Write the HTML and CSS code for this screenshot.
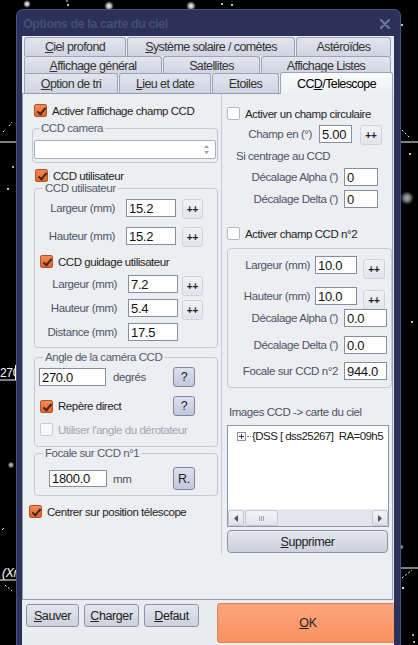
FILE: index.html
```html
<!DOCTYPE html>
<html lang="fr">
<head>
  <meta charset="UTF-8">
  <meta name="viewport" content="width=device-width, initial-scale=1.0">
  <title>Options de la carte du ciel</title>
  <link rel="stylesheet" href="styles.css">
</head>
<body>
  <div class="sky">
    <!-- star chart behind the dialog -->
    <svg class="chart" width="418" height="645" viewBox="0 0 418 645">
      <defs>
        <radialGradient id="glow">
          <stop offset="0" stop-color="#fff"/>
          <stop offset="0.5" stop-color="#ccc" stop-opacity="0.8"/>
          <stop offset="1" stop-color="#888" stop-opacity="0"/>
        </radialGradient>
      </defs>
      <circle cx="27" cy="4" r="4" fill="url(#glow)"/>
      <circle cx="68" cy="5" r="1" fill="#fff"/>
      <circle cx="67" cy="1" r="0.8" fill="#fff"/>
      <circle cx="109" cy="6" r="5" fill="url(#glow)"/>
      <circle cx="191" cy="6" r="5" fill="url(#glow)"/>
      <circle cx="222" cy="4" r="1" fill="#fff"/>
      <circle cx="232" cy="5" r="1" fill="#fff"/>
      <circle cx="402" cy="25" r="1" fill="#fff"/>
      <line x1="0" y1="142" x2="16" y2="142" stroke="#fff"/>
      <line x1="3" y1="132" x2="6" y2="129" stroke="#fff" stroke-dasharray="2 2"/>
      <line x1="9" y1="126" x2="12" y2="122" stroke="#fff" stroke-dasharray="2 2"/>
      <circle cx="13" cy="167" r="1.5" fill="url(#glow)"/>
      <circle cx="8" cy="189" r="1" fill="#fff"/>
      <line x1="401" y1="142" x2="418" y2="142" stroke="#fff"/>
      <line x1="402" y1="130" x2="410" y2="138" stroke="#fff" stroke-dasharray="2 2"/>
      <circle cx="410" cy="154" r="1" fill="#fff"/>
      <circle cx="407" cy="198" r="7" fill="url(#glow)" opacity="0.7"/>
      <circle cx="412" cy="322" r="1" fill="#fff"/>
      <circle cx="11" cy="465" r="3.5" fill="url(#glow)" opacity="0.8"/>
      <circle cx="401" cy="547" r="3" fill="url(#glow)" opacity="0.7"/>
      <line x1="0" y1="380" x2="16" y2="380" stroke="#fff"/>
      <line x1="15.5" y1="365" x2="15.5" y2="380" stroke="#fff"/>
      <text x="0" y="377" fill="#fff" font-family="Liberation Sans, sans-serif" font-size="12">270</text>
      <line x1="2" y1="530" x2="4" y2="528" stroke="#fff"/>
      <text x="2" y="577" fill="#fff" font-family="Liberation Sans, sans-serif" font-size="12" font-style="italic">(Xr</text>
      <line x1="0" y1="580" x2="16" y2="580" stroke="#fff"/>
      <line x1="5" y1="585" x2="12" y2="591" stroke="#fff" stroke-dasharray="2 2"/>
      <line x1="401" y1="568" x2="418" y2="568" stroke="#fff"/>
      <line x1="402" y1="578" x2="412" y2="570" stroke="#fff" stroke-dasharray="2 2"/>
      <circle cx="403" cy="588" r="1.2" fill="#ddd"/>
      <circle cx="413" cy="635" r="1.5" fill="url(#glow)"/>
      <circle cx="414" cy="642" r="1.5" fill="url(#glow)"/>
    </svg>

    <div class="window">
      <div class="titlebar">
        <span class="title">Options de la carte du ciel</span>
        <svg class="close" width="10" height="10" viewBox="0 0 10 10">
          <path d="M1 1 L9 9 M9 1 L1 9" stroke="#6c7497" stroke-width="2.4" stroke-linecap="round"/>
        </svg>
      </div>

      <div class="client">
        <div class="tabs">
          <div class="tab-row row-1">
            <div class="tab w-ciel"><u>C</u>iel profond</div>
            <div class="tab w-systeme"><u>S</u>ystème solaire / comètes</div>
            <div class="tab w-asteroides">Astéroïdes</div>
          </div>
          <div class="tab-row row-2">
            <div class="tab w-affichage"><u>A</u>ffichage général</div>
            <div class="tab w-satellites">Satellites</div>
            <div class="tab w-listes">Affichage Listes</div>
          </div>
          <div class="tab-row row-3">
            <div class="tab w-tri"><u>O</u>ption de tri</div>
            <div class="tab w-lieu"><u>L</u>ieu et date</div>
            <div class="tab w-etoiles">Etoiles</div>
            <div class="tab tab-active">CC<u>D</u>/Telescope</div>
          </div>
        </div>

        <div class="page">
          <div class="col-left">
            <label class="check first"><span class="box on"></span>Activer l'affichage champ CCD</label>

            <fieldset class="group camera">
              <legend>CCD camera</legend>
              <div class="combo">
                <svg class="spin" width="7" height="11" viewBox="0 0 7 11">
                  <path d="M3.5 1 L6 4 L1 4 Z M3.5 10 L6 7 L1 7 Z" fill="#9aa0ad"/>
                </svg>
              </div>
            </fieldset>

            <label class="check user"><span class="box on"></span>CCD utilisateur</label>

            <fieldset class="group user-box">
              <legend>CCD utilisateur</legend>
              <div class="field f-user">
                <span class="lbl">Largeur (mm)</span>
                <input type="text" value="15.2">
                <span class="plus">++</span>
              </div>
              <div class="field f-user mt10">
                <span class="lbl">Hauteur (mm)</span>
                <input type="text" value="15.2">
                <span class="plus">++</span>
              </div>
              <label class="check guide"><span class="box on"></span>CCD guidage utilisateur</label>
              <div class="field f-guide mt7">
                <span class="lbl">Largeur (mm)</span>
                <input type="text" value="7.2">
                <span class="plus low">++</span>
              </div>
              <div class="field f-guide mt6">
                <span class="lbl">Hauteur (mm)</span>
                <input type="text" value="5.4">
                <span class="plus low">++</span>
              </div>
              <div class="field f-guide mt6">
                <span class="lbl">Distance (mm)</span>
                <input type="text" value="17.5">
              </div>
            </fieldset>

            <fieldset class="group angle">
              <legend>Angle de la caméra CCD</legend>
              <div class="line">
                <input type="text" class="deg" value="270.0">
                <span class="unit">degrés</span>
                <span class="qbtn">?</span>
              </div>
              <div class="line repere">
                <label class="check inline"><span class="box on"></span>Repère direct</label>
                <span class="qbtn">?</span>
              </div>
              <label class="check derot disabled"><span class="box off dim"></span>Utiliser l'angle du dérotateur</label>
            </fieldset>

            <fieldset class="group focal">
              <legend>Focale sur CCD n°1</legend>
              <div class="line tall">
                <input type="text" class="mm" value="1800.0">
                <span class="unit">mm</span>
                <span class="qbtn r-btn">R.</span>
              </div>
            </fieldset>

            <label class="check center"><span class="box on"></span>Centrer sur position télescope</label>
          </div>

          <div class="col-right">
            <label class="check circ"><span class="box off"></span>Activer un champ circulaire</label>
            <div class="field f-champ">
              <span class="lbl">Champ en (°)</span>
              <input type="text" value="5.00">
              <span class="plus">++</span>
            </div>
            <div class="note">Si centrage au CCD</div>
            <div class="field f-offset mt5">
              <span class="lbl">Décalage Alpha (')</span>
              <input type="text" value="0">
            </div>
            <div class="field f-offset mt4">
              <span class="lbl">Décalage Delta (')</span>
              <input type="text" value="0">
            </div>

            <label class="check ccd2"><span class="box off"></span>Activer champ CCD n°2</label>

            <div class="panel">
              <div class="field f-size">
                <span class="lbl">Largeur (mm)</span>
                <input type="text" value="10.0">
                <span class="plus drop">++</span>
              </div>
              <div class="field f-size mt13">
                <span class="lbl">Hauteur (mm)</span>
                <input type="text" value="10.0">
                <span class="plus drop">++</span>
              </div>
              <div class="field f-long mt4">
                <span class="lbl">Décalage Alpha (')</span>
                <input type="text" value="0.0">
              </div>
              <div class="field f-long mt9">
                <span class="lbl">Décalage Delta (')</span>
                <input type="text" value="0.0">
              </div>
              <div class="field f-long mt8">
                <span class="lbl">Focale sur CCD n°2</span>
                <input type="text" value="944.0">
              </div>
            </div>

            <div class="list-title">Images CCD -&gt; carte du ciel</div>
            <div class="listbox">
              <div class="tree-item">
                <svg class="expander" width="9" height="9" viewBox="0 0 9 9">
                  <rect x="0.5" y="0.5" width="8" height="8" fill="#fff" stroke="#8d95a5"/>
                  <path d="M2 4.5 H7 M4.5 2 V7" stroke="#333"/>
                </svg>
                <span class="dots"></span>
                <span class="item-text">{DSS [ dss25267]&nbsp; RA=09h5</span>
              </div>
              <div class="hscroll">
                <span class="sb-btn">
                  <svg width="4" height="7" viewBox="0 0 4 7"><path d="M4 0 L0 3.5 L4 7 Z" fill="#555"/></svg>
                </span>
                <span class="sb-thumb"><span class="grip"></span></span>
                <span class="sb-track"></span>
                <span class="sb-btn">
                  <svg width="4" height="7" viewBox="0 0 4 7"><path d="M0 0 L4 3.5 L0 7 Z" fill="#555"/></svg>
                </span>
              </div>
            </div>
            <div class="btn wide"><u>S</u>upprimer</div>
          </div>
        </div>

        <div class="footer">
          <div class="btn small"><u>S</u>auver</div>
          <div class="btn small"><u>C</u>harger</div>
          <div class="btn small"><u>D</u>efaut</div>
          <div class="btn ok"><u>O</u>K</div>
        </div>
      </div>
    </div>
  </div>
</body>
</html>
```

FILE: styles.css
```css
* {
  box-sizing: border-box;
}

body {
  margin: 0;
  background: #000;
  font-family: "Liberation Sans", Arial, sans-serif;
  font-size: 11.5px;
  letter-spacing: -0.3px;
  color: #222;
}

.sky {
  position: relative;
  width: 418px;
  height: 645px;
  overflow: hidden;
  padding-top: 9px;
}

.chart {
  position: absolute;
  left: 0;
  top: 0;
}

/* Dialog frame */
.window {
  position: relative;
  margin-left: 16px;
  width: 385px;
  height: 650px;
  background: #2b3159;
  border: 1px solid #4a5283;
  border-bottom: none;
  border-radius: 7px 7px 0 0;
  padding: 0 6px 0 5px;
}

.titlebar {
  height: 26px;
  display: flex;
  align-items: center;
  justify-content: space-between;
  padding: 2px 4px 0 1px;
}

.title {
  font-weight: bold;
  font-size: 12.5px;
  letter-spacing: -0.4px;
  color: #474e76;
}

.client {
  height: 623px;
  background: #ebecf0;
  overflow: hidden;
}

/* Tabs */
.tabs {
  padding: 1px 0 0 2px;
}

.tab-row {
  display: flex;
  gap: 1px;
}

.row-1 { height: 19px; }
.row-2 { height: 17px; }
.row-3 { height: 20px; }

.tab {
  height: 100%;
  display: flex;
  align-items: center;
  justify-content: center;
  font-size: 12.5px;
  letter-spacing: -0.6px;
  color: #333;
  background: linear-gradient(#e2e5ee, #d0d4e1);
  border: 1px solid #9ca2b8;
  border-bottom: none;
  border-radius: 3px 3px 0 0;
}

.row-2 .tab {
  height: 18px;
}

.w-ciel { width: 102px; }
.w-systeme { width: 168px; }
.w-asteroides { width: 95px; }
.w-affichage { width: 138px; }
.w-satellites { width: 97px; }
.w-listes { width: 130px; }
.w-tri { width: 94px; }
.w-lieu { width: 92px; }
.w-etoiles { width: 67px; }

.tab-active {
  position: relative;
  z-index: 1;
  width: 113px;
  height: 22px;
  margin-top: -1px;
  color: #000;
  background: linear-gradient(#fbfbfb, #eef0f3);
}

/* Page content */
.page {
  height: 507px;
  width: 371px;
  border: 1px solid #959bb0;
  background: #eceef2;
  display: flex;
  align-items: flex-start;
}

.col-left {
  width: 198px;
}

.col-right {
  width: 171px;
  border-left: 1px solid #c9ccd6;
  padding-bottom: 2px;
}

/* Check boxes */
.check {
  display: flex;
  align-items: center;
  height: 13px;
  gap: 5px;
  color: #1e1e1e;
  font-size: 11.5px;
  letter-spacing: -0.45px;
  white-space: nowrap;
}

.box {
  position: relative;
  flex: none;
  width: 13px;
  height: 13px;
  border-radius: 2px;
}

.box.on {
  background: linear-gradient(#f28a55, #e2662f);
  border: 1px solid #b25428;
}

.box.on::after {
  content: "";
  position: absolute;
  left: 4px;
  top: 1px;
  width: 3px;
  height: 7px;
  border-right: 2px solid #4a2410;
  border-bottom: 2px solid #4a2410;
  transform: rotate(40deg);
}

.box.off {
  background: #fff;
  border: 1px solid #b3b8c5;
}

.box.dim {
  background: #f6f7f9;
  border-color: #c8ccd6;
}

.check.disabled {
  color: #a2a6ae;
}

.check.first { margin: 10px 0 0 11px; }
.check.user { margin: 6px 0 0 12px; }
.check.guide { margin: 10px 0 0 5px; }
.check.derot { margin: 7px 0 0 5px; }
.check.center { margin: 9px 0 0 6px; }
.check.circ { margin: 13px 0 0 5px; }
.check.ccd2 { margin: 19px 0 0 5px; }
.check.inline { margin-left: 5px; }

/* Group boxes */
.group {
  margin: 0 0 0 11px;
  padding: 0;
  width: 184px;
  min-width: 0;
  border: 1px solid #c4c8d3;
  border-radius: 4px;
}

.group legend {
  margin-left: 8px;
  padding: 0 2px;
  line-height: 13px;
  color: #555c6c;
  font-size: 11.5px;
  letter-spacing: -0.45px;
}

.group.camera {
  margin: 5px 0 0 9px;
  width: 186px;
  padding: 5px 1px 3px;
}

.group.camera legend {
  margin-left: 5px;
}

.group.user-box {
  padding: 4px 0 6px;
}

.group.angle {
  margin-top: 3px;
  padding: 3px 0 10px;
}

.group.focal {
  padding: 7px 0 5px;
}

.combo {
  height: 19px;
  background: #fff;
  border: 1px solid #a9b0bc;
  border-radius: 2px;
  display: flex;
  align-items: center;
  justify-content: flex-end;
  padding-right: 5px;
}

/* Label + input rows */
.field {
  display: flex;
  align-items: flex-start;
  height: 18px;
}

.field .lbl {
  flex: none;
  text-align: right;
  line-height: 18px;
  color: #4d5465;
  font-size: 11.5px;
  letter-spacing: -0.4px;
  white-space: nowrap;
}

input {
  height: 18px;
  margin: 0;
  padding: 0 2px;
  border: 1px solid #858d9e;
  background: #fff;
  font-family: "Liberation Sans", Arial, sans-serif;
  font-size: 13px;
  letter-spacing: -0.3px;
  color: #111;
}

.mt4 { margin-top: 4px; }
.mt5 { margin-top: 5px; }
.mt6 { margin-top: 6px; }
.mt7 { margin-top: 7px; }
.mt8 { margin-top: 8px; }
.mt9 { margin-top: 9px; }
.mt10 { margin-top: 10px; }
.mt13 { margin-top: 13px; }

.f-user .lbl { width: 80px; margin-right: 11px; }
.f-user input { width: 50px; margin-right: 6px; }

.f-guide .lbl { width: 82px; margin-right: 11px; }
.f-guide input { width: 50px; margin-right: 4px; }

.f-champ { margin: 5px 0 0; height: 20px; }
.f-champ .lbl { width: 90px; margin-right: 7px; }
.f-champ input { width: 33px; margin-right: 8px; }

.f-offset .lbl { width: 116px; margin-right: 6px; }
.f-offset input { width: 34px; }

.f-size .lbl { width: 82px; margin-right: 5px; }
.f-size input { width: 42px; margin-right: 6px; }

.f-long .lbl { width: 110px; margin-right: 6px; }
.f-long input { width: 43px; }

/* Small push buttons */
.plus {
  flex: none;
  width: 21px;
  height: 20px;
  display: flex;
  align-items: flex-end;
  justify-content: center;
  padding-bottom: 3px;
  font-size: 10px;
  font-weight: bold;
  letter-spacing: 0;
  color: #222;
  background: linear-gradient(#f1f2f5, #e1e4ea);
  border: 1px solid #d0d3dc;
  border-radius: 3px;
}

.plus.low {
  margin-top: 1px;
}

.plus.drop {
  width: 22px;
  margin-top: 3px;
}

.f-champ .plus {
  width: 22px;
}

.line {
  display: flex;
  align-items: center;
  height: 20px;
}

.line.repere {
  margin-top: 9px;
}

.line.tall {
  height: 23px;
}

.line .unit {
  margin-left: 7px;
  color: #4d5465;
  font-size: 11.5px;
  letter-spacing: -0.4px;
}

input.deg {
  width: 67px;
  margin-left: 4px;
}

input.mm {
  width: 58px;
  height: 17px;
  margin-left: 14px;
}

.line.tall .unit {
  margin-left: 6px;
}

.qbtn {
  margin-left: auto;
  margin-right: 22px;
  width: 22px;
  height: 20px;
  display: flex;
  align-items: center;
  justify-content: center;
  font-size: 12.5px;
  color: #222;
  background: linear-gradient(#dce0ef, #c2c7dc);
  border: 1px solid #7e86a3;
  border-radius: 3px;
}

.qbtn.r-btn {
  height: 23px;
}

/* Right column */
.note {
  margin: 5px 0 0 14px;
  line-height: 13px;
  color: #4d5465;
  font-size: 11.5px;
  letter-spacing: -0.45px;
}

.panel {
  margin: 8px 0 0 5px;
  width: 165px;
  border: 1px solid #c4c8d3;
  border-radius: 4px;
  padding: 7px 0 7px;
}

.list-title {
  margin: 18px 0 0 7px;
  line-height: 13px;
  color: #4d5465;
  font-size: 11.5px;
  letter-spacing: -0.45px;
}

.listbox {
  margin: 6px 0 0 5px;
  width: 162px;
  height: 102px;
  background: #fff;
  border: 1px solid #8d96a8;
  display: flex;
  flex-direction: column;
  justify-content: space-between;
  overflow: hidden;
}

.tree-item {
  display: flex;
  align-items: center;
  padding: 4px 0 0 9px;
  white-space: nowrap;
  font-size: 11.5px;
  letter-spacing: -0.55px;
  color: #222;
}

.expander {
  flex: none;
}

.dots {
  flex: none;
  width: 4px;
  margin: 0 1px 0 1px;
  border-top: 1px dotted #777;
}

.hscroll {
  display: flex;
  height: 17px;
  background: #e4e6ed;
  border-top: 1px solid #eef0f4;
}

.sb-btn {
  width: 16px;
  display: flex;
  align-items: center;
  justify-content: center;
  background: linear-gradient(#f3f4f7, #dde0e7);
  border: 1px solid #c3c7d1;
  border-radius: 2px;
}

.sb-thumb {
  width: 33px;
  margin-left: 1px;
  display: flex;
  align-items: center;
  justify-content: center;
  background: linear-gradient(#f4f5f8, #e1e4ea);
  border: 1px solid #c3c7d1;
  border-radius: 3px;
}

.grip {
  width: 5px;
  height: 5px;
  border-left: 1px solid #9ea4b0;
  border-right: 1px solid #9ea4b0;
  position: relative;
}

.grip::after {
  content: "";
  position: absolute;
  left: 1px;
  top: 0;
  height: 5px;
  border-left: 1px solid #9ea4b0;
}

.sb-track {
  flex: 1;
}

/* Push buttons */
.btn {
  display: flex;
  align-items: center;
  justify-content: center;
  font-size: 12.5px;
  letter-spacing: -0.4px;
  color: #222;
  background: linear-gradient(#e3e6ef, #cdd1de);
  border: 1px solid #8c92a9;
  border-radius: 3px;
}

.btn.wide {
  margin: 3px 0 0 5px;
  width: 161px;
  height: 23px;
  border-radius: 4px;
}

.footer {
  display: flex;
  align-items: flex-start;
  gap: 5px;
  padding: 3px 0 0 4px;
}

.btn.small {
  flex: none;
  height: 23px;
  width: 55px;
  margin-top: 1px;
}

.btn.small:first-child {
  width: 53px;
}

.btn.ok {
  flex: none;
  margin-left: 13px;
  width: 182px;
  height: 40px;
  background: linear-gradient(#fda47c, #f9935f);
  border-color: #d8845e;
  font-size: 12.5px;
}
```
